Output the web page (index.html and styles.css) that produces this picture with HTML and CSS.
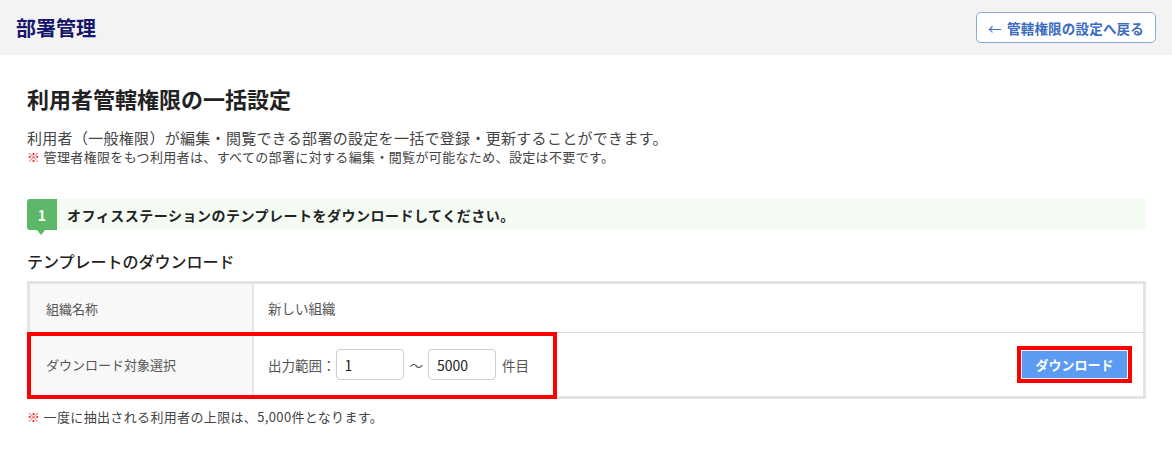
FILE: index.html
```html
<!DOCTYPE html>
<html lang="ja">
<head>
    <meta charset="UTF-8">
    <meta name="viewport" content="width=device-width, initial-scale=1.0">
    <title>部署管理</title>
    <link rel="stylesheet" href="styles.css">
</head>
<body>
    <header class="page-header">
        <h1 class="page-title">部署管理</h1>
        <button class="back-btn"><span class="back-arrow">←</span> 管轄権限の設定へ戻る</button>
    </header>

    <main class="content">
        <h2 class="section-title">利用者管轄権限の一括設定</h2>
        <p class="lead">利用者（一般権限）が編集・閲覧できる部署の設定を一括で登録・更新することができます。</p>
        <p class="note"><span class="mark">※</span> 管理者権限をもつ利用者は、すべての部署に対する編集・閲覧が可能なため、設定は不要です。</p>

        <div class="step">
            <span class="step-num">1</span>
            <span class="step-text">オフィスステーションのテンプレートをダウンロードしてください。</span>
        </div>

        <h3 class="sub-title">テンプレートのダウンロード</h3>

        <div class="spec">
            <div class="spec-row">
                <div class="spec-label">組織名称</div>
                <div class="spec-value">新しい組織</div>
            </div>
            <div class="spec-row spec-row-tall">
                <div class="spec-label">ダウンロード対象選択</div>
                <div class="spec-value">
                    <span>出力範囲：</span>
                    <input type="text" class="range-input" value="1">
                    <span class="tilde">～</span>
                    <input type="text" class="range-input" value="5000">
                    <span>件目</span>
                    <button class="download-btn">ダウンロード</button>
                </div>
            </div>
            <div class="highlight"></div>
        </div>

        <p class="note footer-note"><span class="mark">※</span> 一度に抽出される利用者の上限は、5,000件となります。</p>
    </main>
</body>
</html>
```

FILE: styles.css
```css
body { margin: 0; font-family: "Noto Sans CJK JP", "Noto Sans", sans-serif; color: #333; background: #fff; }
.page-header { height: 55px; padding: 0 16px; background: #f3f3f3; display: flex; align-items: center; justify-content: space-between; }
.page-title { margin: 0; font-size: 20px; font-weight: bold; color: #16166c; }
.back-btn { height: 31px; width: 180px; padding: 0; border: 1px solid #86a9e0; border-radius: 5px; background: #fff; color: #3a6cc2; font-family: inherit; font-size: 13.5px; font-weight: bold; letter-spacing: 0.2px; cursor: pointer; }
.back-arrow { font-weight: normal; margin-right: 2px; }

.content { padding: 0 26px 0 27px; }
.section-title { margin: 28px 0 0; font-size: 22px; line-height: 30px; font-weight: bold; color: #222; }
.lead { margin: 15px 0 0; font-size: 15px; line-height: 20px; color: #444; letter-spacing: 0.3px; }
.note { margin: 0; font-size: 13px; line-height: 17px; color: #444; letter-spacing: 0.35px; }
.mark { color: #f0201c; font-weight: bold; }

.step { position: relative; margin-top: 34px; height: 31px; display: flex; align-items: center; background: #f3fbf3; border-radius: 4px; }
.step-num { width: 30px; height: 31px; display: flex; align-items: center; justify-content: center; background: #5cb769; color: #fff; font-weight: bold; font-size: 14px; border-radius: 3px 0 0 3px; }
.step-num::after { content: ""; position: absolute; left: 10px; top: 31px; border-left: 4px solid transparent; border-right: 4px solid transparent; border-top: 5px solid #5cb769; }
.step-text { margin-left: 10px; font-size: 14px; font-weight: bold; color: #222; letter-spacing: 0.5px; }

.sub-title { margin: 20px 0 0; font-size: 16px; line-height: 22px; font-weight: 500; color: #222; }

.spec { position: relative; margin-top: 9px; border: 3px solid #e4e4e4; }
.spec-row { display: flex; height: 48px; border-bottom: 1px solid #dedede; }
.spec-row-tall { height: 63px; border-bottom: none; }
.spec-label { width: 206px; padding-left: 16px; display: flex; align-items: center; background: #f8f8f8; border-right: 2px solid #e6e6e6; font-size: 13px; color: #555; }
.spec-value { flex: 1; padding: 0 16px 0 14px; display: flex; align-items: center; font-size: 13.5px; color: #555; }
.range-input { width: 68px; height: 31px; box-sizing: border-box; margin: 0 6px 0 0; padding: 0 8px; border: 1px solid #cfcfcf; border-radius: 4px; font-family: inherit; font-size: 14px; color: #222; }
.tilde { margin: 0 5px 0 0; }
.download-btn { margin-left: auto; width: 105px; height: 27px; border: none; background: #5b9bf1; color: #fff; font-family: inherit; font-size: 13px; font-weight: bold; outline: 4px solid #ff0000; outline-offset: 1px; cursor: pointer; }

.highlight { position: absolute; left: -3px; top: 48px; width: 522px; height: 59px; border: 4px solid #ff0000; pointer-events: none; }

.footer-note { margin-top: 9px; }
```
